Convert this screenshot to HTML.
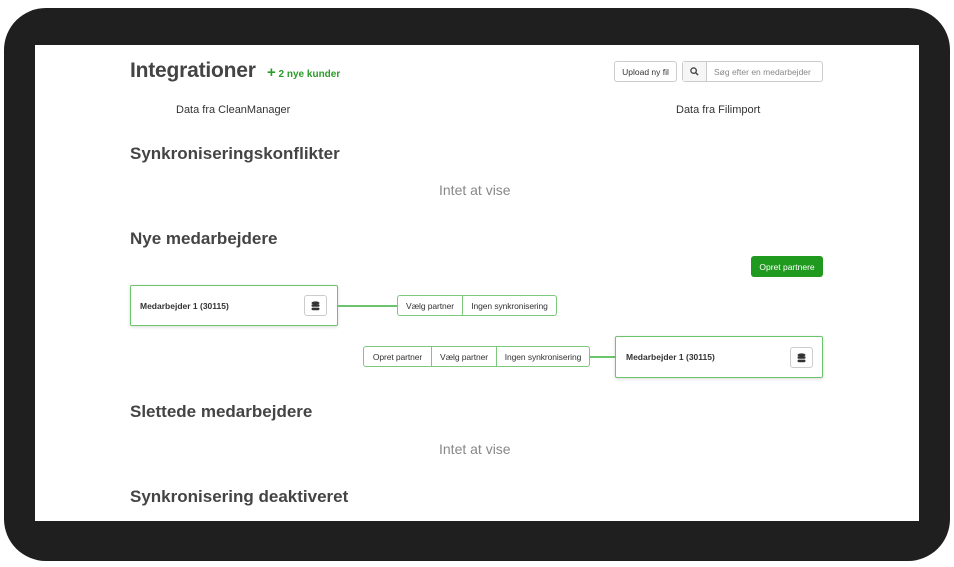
<!DOCTYPE html>
<html><head><style>
*{box-sizing:border-box;margin:0;padding:0}
body{width:954px;height:567px;background:#fff;position:relative;overflow:hidden;font-family:"Liberation Sans",Arial,sans-serif;color:#333}
.frame{position:absolute;left:4px;top:8px;width:946px;height:553px;background:#1f1f1f;border-radius:42px}
.screen{position:absolute;left:35px;top:45px;width:884px;height:476px;background:#fff;overflow:hidden}
.a{position:absolute;white-space:nowrap}
h1{font-size:21px;font-weight:bold;color:#444;letter-spacing:-0.2px}
h2{font-size:17px;font-weight:bold;color:#444}
.btn{position:absolute;border:1px solid #ccc;border-radius:3px;background:#fff;font-size:8.5px;color:#333;display:flex;align-items:center;justify-content:center}
.card{position:absolute;border:1px solid #6cc46c;background:#fff;box-shadow:0 1px 3px rgba(0,0,0,.15);border-radius:2px}
.grp{position:absolute;display:flex;border:1px solid #7cc87c;border-radius:3px;background:#fff;height:21px;font-size:8.5px;letter-spacing:-0.1px}
.grp span{padding:0 7px;display:flex;align-items:center;border-left:1px solid #7cc87c}
.grp span:first-child{border-left:none}
.line{position:absolute;height:2px;background:#6cc46c}
.ib{position:absolute;width:23px;height:21px;border:1px solid #ccc;border-radius:3px;display:flex;align-items:center;justify-content:center}
</style></head><body>
<div class="frame"></div>
<div class="screen">
<h1 class="a" style="left:95px;top:14px">Integrationer</h1>
<div class="a" style="left:232px;top:19px;font-size:10px;font-weight:bold;color:#2a9d2a"><span style="font-size:15px">+</span> 2 nye kunder</div>
<div class="btn" style="left:579px;top:16px;width:63px;height:21px">Upload ny fil</div>
<div class="btn" style="left:647px;top:16px;width:141px;height:21px;justify-content:flex-start;padding:0">
<div style="width:24px;height:100%;border-right:1px solid #ccc;background:#f6f6f6;display:flex;align-items:center;justify-content:center"><svg width="9" height="9" viewBox="0 0 10 10"><circle cx="4" cy="4" r="3" fill="none" stroke="#444" stroke-width="1.5"/><path d="M6.3 6.3L9 9" stroke="#444" stroke-width="1.6"/></svg></div>
<span style="padding-left:7px;color:#888;font-size:8.5px">Søg efter en medarbejder</span></div>
<div class="a" style="left:141px;top:59px;font-size:11px">Data fra CleanManager</div>
<div class="a" style="left:641px;top:59px;font-size:11px">Data fra Filimport</div>
<h2 class="a" style="left:95px;top:99px">Synkroniseringskonflikter</h2>
<div class="a" style="left:404px;top:137px;font-size:14px;color:#888">Intet at vise</div>
<h2 class="a" style="left:95px;top:184px">Nye medarbejdere</h2>
<div class="a" style="left:716px;top:211px;width:72px;height:21px;background:#1f9a1f;border-radius:3px;color:#fff;font-size:8.5px;display:flex;align-items:center;justify-content:center">Opret partnere</div>
<div class="card" style="left:95px;top:240px;width:208px;height:41px"><div class="a" style="left:9px;top:15px;font-size:8.5px;font-weight:bold">Medarbejder 1 (30115)</div>
<div class="ib" style="left:173px;top:9px"><svg width="9" height="10" viewBox="0 0 9 10"><ellipse cx="4.5" cy="2" rx="4" ry="1.6" fill="#333"/><rect x=".5" y="3.3" width="8" height="2.4" rx="1" fill="#333"/><rect x=".5" y="6.6" width="8" height="2.6" rx="1.2" fill="#333"/></svg></div></div>
<div class="line" style="left:303px;top:260px;width:59px"></div>
<div class="grp" style="left:362px;top:250px;width:160px"><span style="width:64px;justify-content:center">Vælg partner</span><span style="flex:1;justify-content:center">Ingen synkronisering</span></div>
<div class="grp" style="left:328px;top:301px;width:227px"><span style="width:67px;justify-content:center">Opret partner</span><span style="width:65px;justify-content:center">Vælg partner</span><span style="flex:1;justify-content:center">Ingen synkronisering</span></div>
<div class="line" style="left:555px;top:311px;width:25px"></div>
<div class="card" style="left:580px;top:291px;width:208px;height:42px"><div class="a" style="left:10px;top:15px;font-size:8.5px;font-weight:bold">Medarbejder 1 (30115)</div>
<div class="ib" style="left:174px;top:10px"><svg width="9" height="10" viewBox="0 0 9 10"><ellipse cx="4.5" cy="2" rx="4" ry="1.6" fill="#333"/><rect x=".5" y="3.3" width="8" height="2.4" rx="1" fill="#333"/><rect x=".5" y="6.6" width="8" height="2.6" rx="1.2" fill="#333"/></svg></div></div>
<h2 class="a" style="left:95px;top:357px">Slettede medarbejdere</h2>
<div class="a" style="left:404px;top:396px;font-size:14px;color:#888">Intet at vise</div>
<h2 class="a" style="left:95px;top:442px">Synkronisering deaktiveret</h2>
</div>
</body></html>
